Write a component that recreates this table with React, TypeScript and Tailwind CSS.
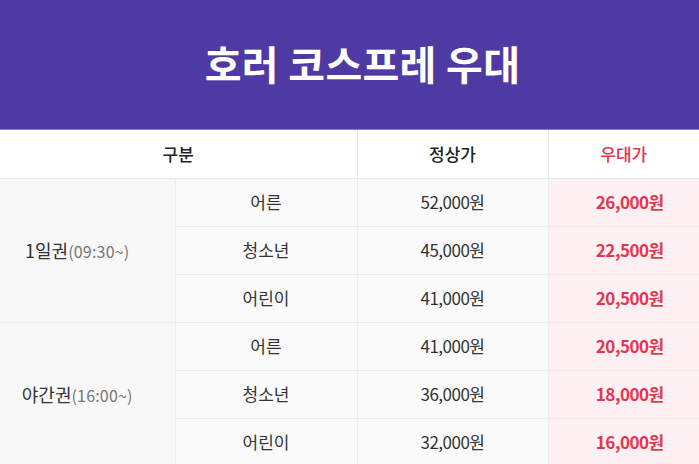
const rows = [
    { pass: "1일권", time: "(09:30~)", items: [["어른", "52,000원", "26,000원"], ["청소년", "45,000원", "22,500원"], ["어린이", "41,000원", "20,500원"]] },
    { pass: "야간권", time: "(16:00~)", items: [["어른", "41,000원", "20,500원"], ["청소년", "36,000원", "18,000원"], ["어린이", "32,000원", "16,000원"]] },
]

export default function App() {
    return (
        <div className="w-[699px] h-[464px] overflow-hidden bg-white" style={{ fontFamily: "'Noto Sans CJK KR', 'Noto Sans', sans-serif" }}>
            <div className="h-[130px] bg-[#4e3aa2] border-b border-[#8f7fd0] flex items-center justify-center">
                <h1 className="text-[40px] font-bold text-white pl-[26px] pb-[4px] tracking-[0.3px]">호러 코스프레 우대</h1>
            </div>
            <table className="w-full border-collapse table-fixed text-[17px] text-[#333]">
                <colgroup>
                    <col className="w-[175px]" />
                    <col className="w-[182px]" />
                    <col className="w-[191px]" />
                    <col />
                </colgroup>
                <thead>
                    <tr className="h-[48px]">
                        <th colSpan={2} className="font-medium text-[#222] border-b border-r border-[#e8e8e8]">구분</th>
                        <th className="font-medium text-[#222] border-b border-r border-[#e8e8e8]">정상가</th>
                        <th className="font-medium text-[#e8344e] border-b border-[#e8e8e8]">우대가</th>
                    </tr>
                </thead>
                <tbody>
                    {rows.map((group) =>
                        group.items.map((item, i) => (
                            <tr key={group.pass + i} className="h-[48px]">
                                {i === 0 && (
                                    <td rowSpan={3} className="bg-[#f8f8f8] border-b border-r border-[#ececec] text-center pr-[20px]">
                                        <span className="text-[18px]">{group.pass}</span>
                                        <span className="text-[16px] text-[#777] tracking-[0.2px]">{group.time}</span>
                                    </td>
                                )}
                                <td className="bg-[#fafafa] border-b border-r border-[#ececec] text-center">{item[0]}</td>
                                <td className="bg-[#fafafa] border-b border-r border-[#ececec] text-center tracking-[-0.5px]">{item[1]}</td>
                                <td className="bg-[#fff1f3] border-b border-[#ececec] text-center font-bold text-[#e5364f] tracking-[-0.5px] pl-[12px]">{item[2]}</td>
                            </tr>
                        ))
                    )}
                </tbody>
            </table>
        </div>
    )
}
